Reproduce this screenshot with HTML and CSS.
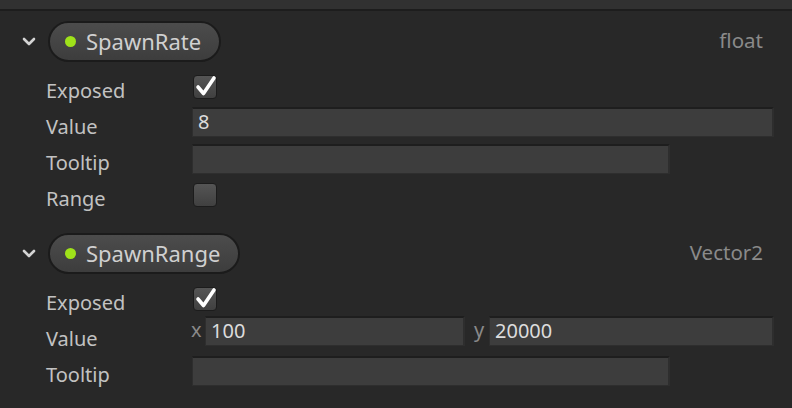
FILE: index.html
```html
<!DOCTYPE html>
<html>
<head>
<meta charset="utf-8">
<link rel="stylesheet" href="styles.css">
</head>
<body>
<div class="topbar"></div>
<div class="panel">
  <section class="param">
    <div class="header">
      <svg class="chevron" width="14" height="9" viewBox="0 0 14 9"><path d="M2 2 L7 7 L12 2" fill="none" stroke="#d4d4d4" stroke-width="2.6" stroke-linecap="round" stroke-linejoin="round"/></svg>
      <div class="pill"><span class="dot"></span><span class="pill-text">SpawnRate</span></div>
      <span class="type">float</span>
    </div>
    <div class="row"><span class="label">Exposed</span><span class="check on"><svg width="26" height="24" viewBox="0 0 26 24"><path d="M5 12 L10.5 18.5 L21 3" fill="none" stroke="#ffffff" stroke-width="3.6" stroke-linecap="round" stroke-linejoin="round"/></svg></span></div>
    <div class="row"><span class="label">Value</span><div class="field wide">8</div></div>
    <div class="row"><span class="label">Tooltip</span><div class="field mid"></div></div>
    <div class="row"><span class="label">Range</span><span class="check"></span></div>
  </section>
  <section class="param second">
    <div class="header">
      <svg class="chevron" width="14" height="9" viewBox="0 0 14 9"><path d="M2 2 L7 7 L12 2" fill="none" stroke="#d4d4d4" stroke-width="2.6" stroke-linecap="round" stroke-linejoin="round"/></svg>
      <div class="pill"><span class="dot"></span><span class="pill-text">SpawnRange</span></div>
      <span class="type">Vector2</span>
    </div>
    <div class="row"><span class="label">Exposed</span><span class="check on"><svg width="26" height="24" viewBox="0 0 26 24"><path d="M5 12 L10.5 18.5 L21 3" fill="none" stroke="#ffffff" stroke-width="3.6" stroke-linecap="round" stroke-linejoin="round"/></svg></span></div>
    <div class="row"><span class="label">Value</span>
      <div class="vec">
        <span class="axis ax-x">x</span><div class="field vx">100</div>
        <span class="axis ax-y">y</span><div class="field vy">20000</div>
      </div>
    </div>
    <div class="row"><span class="label">Tooltip</span><div class="field mid"></div></div>
  </section>
</div>
</body>
</html>
```
FILE: styles.css
```css
html, body {
  margin: 0;
  padding: 0;
  background: #282828;
  font-family: "Noto Sans", "Open Sans", sans-serif;
  width: 792px;
  height: 408px;
  overflow: hidden;
}
.topbar {
  height: 9px;
  background: #313131;
  border-bottom: 2px solid #1d1d1d;
}
.panel {
  padding-top: 10px;
}
.param.second {
  margin-top: 19px;
}
.header {
  display: flex;
  align-items: center;
  height: 41px;
  padding-left: 22px;
  padding-right: 29px;
}
.chevron {
  width: 14px;
  height: 9px;
  margin-right: 12px;
}
.pill {
  display: flex;
  align-items: center;
  height: 37px;
  padding: 0 18px 0 15px;
  border: 2px solid #1b1b1b;
  border-radius: 21px;
  background: linear-gradient(#4c4c4c, #3d3d3d);
}
.dot {
  width: 11px;
  height: 11px;
  border-radius: 50%;
  background: #9fe21a;
  margin-right: 10px;
}
.pill-text {
  font-size: 22px;
  color: #d0d0d0;
  line-height: 1;
  margin-top: -2px;
}
.type {
  margin-left: auto;
  font-size: 20.5px;
  color: #8a8a8a;
  margin-top: -4px;
}
.header + .row {
  margin-top: 8px;
}
.row {
  display: flex;
  align-items: center;
  height: 36px;
  padding-left: 46px;
}
.label {
  width: 146px;
  font-size: 20px;
  color: #c2c2c2;
  padding-top: 5px;
  line-height: 1;
}
.check {
  width: 22px;
  height: 22px;
  margin-left: 1px;
  margin-top: -2px;
  border: 1px solid #1c1c1c;
  border-radius: 4px;
  background: linear-gradient(#555555, #404040);
  position: relative;
}
.check svg {
  position: absolute;
  left: -1px;
  top: -1px;
}
.field {
  box-sizing: border-box;
  height: 30px;
  background: #3d3d3d;
  border-top: 2px solid #1e1e1e;
  border-left: 1px solid #2e2e2e;
  border-right: 2px solid #2e2e2e;
  border-bottom: 1px solid #2e2e2e;
  font-size: 20px;
  color: #dcdcdc;
  line-height: 26px;
  padding-left: 5px;
}
.wide {
  width: 582px;
  margin-top: -5px;
}
.mid {
  width: 478px;
  margin-top: -3px;
}
.vec {
  display: flex;
  align-items: center;
  width: 583px;
  margin-left: -1px;
  margin-top: -10px;
}
.axis {
  font-size: 20px;
  color: #8a8a8a;
  line-height: 1;
  margin-top: -2px;
}
.ax-x {
  width: 14px;
}
.ax-y {
  width: 15px;
  margin-left: 9px;
}
.vx {
  width: 260px;
}
.vy {
  flex: 1;
}
```
